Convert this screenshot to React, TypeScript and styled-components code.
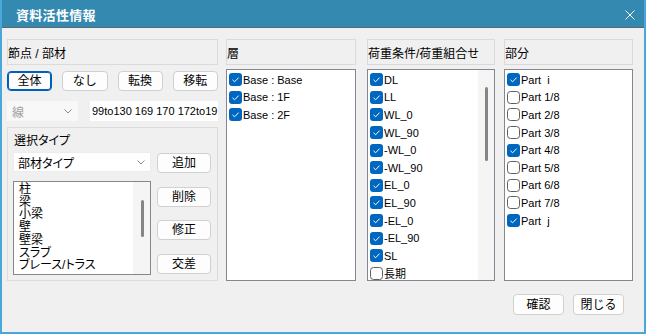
import styled, { createGlobalStyle } from "styled-components";

const GlobalStyle = createGlobalStyle`
  html, body {
    margin: 0;
    padding: 0;
  }
  body {
    font-family: "Liberation Sans", "Noto Sans CJK JP", sans-serif;
    font-size: 12px;
    color: #000;
    background: #f0f0f0;
    font-feature-settings: "palt";
  }
`;

const Window = styled.div`
  width: 646px;
  height: 334px;
  box-sizing: border-box;
  border: 2px solid #4aa8d8;
  border-top: none;
  background: #f0f0f0;
  display: flex;
  flex-direction: column;
`;

const TitleBar = styled.div`
  height: 28px;
  flex: none;
  background: #3489b0;
  border-bottom: 1px solid #5b6670;
  display: flex;
  align-items: center;
  justify-content: space-between;
  padding: 2px 9px 0 14px;
  box-sizing: border-box;
`;

const Title = styled.div`
  color: #fff;
  font-family: "Noto Sans CJK JP", sans-serif;
  font-weight: bold;
  font-size: 13px;
  letter-spacing: 0.3px;
`;

const Body = styled.div`
  display: flex;
  padding: 11px 0 0 5px;
  height: 242px;
`;

const Column = styled.div<{ $w: number; $ml?: number }>`
  width: ${(p) => p.$w}px;
  margin-left: ${(p) => p.$ml ?? 0}px;
  display: flex;
  flex-direction: column;
`;

const Header = styled.div`
  height: 26px;
  flex: none;
  box-sizing: border-box;
  border: 1px solid #dadada;
  display: flex;
  align-items: center;
  padding-left: 0;
  font-size: 12px;
  white-space: nowrap;
  overflow: hidden;
`;

const ButtonRow = styled.div`
  display: grid;
  grid-template-columns: repeat(4, 1fr);
  column-gap: 10px;
  margin-top: 6px;
  height: 20px;
`;

const Button = styled.button<{ $focused?: boolean; $w?: number; $h?: number }>`
  font-family: "Liberation Sans", "Noto Sans CJK JP", sans-serif;
  font-size: 12px;
  color: #000;
  background: #fdfdfd;
  border: 1px solid ${(p) => (p.$focused ? "#005fb8" : "#d0d0d0")};
  box-shadow: ${(p) => (p.$focused ? "inset 0 0 0 1px #005fb8" : "none")};
  border-radius: 4px;
  padding: 0;
  width: ${(p) => (p.$w ? `${p.$w}px` : "auto")};
  height: ${(p) => p.$h ?? 20}px;
  line-height: 1;
  flex: none;
`;

const FieldRow = styled.div`
  display: flex;
  margin-top: 10px;
  height: 20px;
`;

const Combo = styled.div<{ $disabled?: boolean; $w: number }>`
  width: ${(p) => p.$w}px;
  height: 20px;
  box-sizing: border-box;
  background: ${(p) => (p.$disabled ? "#f8f8f8" : "#fff")};
  border: 1px solid ${(p) => (p.$disabled ? "#f8f8f8" : "#ececec")};
  color: ${(p) => (p.$disabled ? "#a0a0a0" : "#000")};
  display: flex;
  align-items: center;
  justify-content: space-between;
  padding: 0 5px 0 4px;
  font-size: 12px;
  flex: none;
`;

const TextField = styled.div`
  margin-left: 12px;
  flex: 1;
  background: #fff;
  padding-left: 2px;
  display: flex;
  align-items: center;
  white-space: nowrap;
  overflow: hidden;
  font-size: 11px;
`;

const Group = styled.div`
  margin-top: 6px;
  flex: 1;
  border: 1px solid #dcdcdc;
  padding: 6px 6px 0 5px;
  display: flex;
  flex-direction: column;
`;

const GroupLabel = styled.div`
  height: 14px;
  line-height: 14px;
  padding-left: 1px;
  font-size: 12px;
`;

const GroupInner = styled.div`
  display: flex;
  margin-top: 4px;
  gap: 6px;
`;

const Stack = styled.div<{ $gap?: number; $pt?: number }>`
  display: flex;
  flex-direction: column;
  gap: ${(p) => p.$gap ?? 0}px;
  padding-top: ${(p) => p.$pt ?? 0}px;
`;

const ListBox = styled.div<{ $h: number; $mt: number }>`
  height: ${(p) => p.$h}px;
  margin-top: ${(p) => p.$mt}px;
  box-sizing: border-box;
  border: 1px solid #828790;
  background: #fff;
  display: flex;
  overflow: hidden;
`;

const TextItems = styled.div`
  flex: 1;
  padding: 1px 0 0 5px;
  font-size: 12px;
  line-height: 12.7px;
  overflow: hidden;
`;

const CheckItems = styled.div`
  flex: 1;
  padding: 1px 0 0 2px;
  overflow: hidden;
`;

const CheckRow = styled.div`
  height: 17.6px;
  display: flex;
  align-items: center;
  gap: 1px;
  font-size: 11px;
  white-space: pre;
`;

const Track = styled.div<{ $w: number }>`
  width: ${(p) => p.$w}px;
  flex: none;
  background: #f5f5f5;
  position: relative;
`;

const Thumb = styled.div`
  position: absolute;
  left: 50%;
  width: 3px;
  margin-left: -1px;
  border-radius: 2px;
  background: #858585;
`;

const Footer = styled.div`
  display: flex;
  justify-content: flex-end;
  gap: 9px;
  margin-top: 13px;
  padding-right: 20px;
`;

const Chevron = () => (
  <svg width="8" height="5" viewBox="0 0 8 5">
    <polyline points="0.5,0.5 4,4 7.5,0.5" fill="none" stroke="#8a8a8a" strokeWidth="1" />
  </svg>
);

const Check = ({ on }: { on: boolean }) => (
  <svg width="13" height="13" viewBox="0 0 13 13" style={{ flex: "none" }}>
    {on ? (
      <>
        <rect x="0" y="0" width="13" height="13" rx="3" fill="#0067c0" />
        <polyline points="3.5,6.8 5.6,8.8 9.6,4.6" fill="none" stroke="#fff" strokeWidth="1" />
      </>
    ) : (
      <rect x="0.5" y="0.5" width="12" height="12" rx="3" fill="#fff" stroke="#5f5f5f" />
    )}
  </svg>
);

const CheckList = ({ items }: { items: [string, boolean][] }) => (
  <CheckItems>
    {items.map(([label, on]) => (
      <CheckRow key={label}>
        <Check on={on} />
        {label}
      </CheckRow>
    ))}
  </CheckItems>
);

const floors: [string, boolean][] = [
  ["Base : Base", true],
  ["Base : 1F", true],
  ["Base : 2F", true],
];

const loads: [string, boolean][] = [
  ["DL", true],
  ["LL", true],
  ["WL_0", true],
  ["WL_90", true],
  ["-WL_0", true],
  ["-WL_90", true],
  ["EL_0", true],
  ["EL_90", true],
  ["-EL_0", true],
  ["-EL_90", true],
  ["SL", true],
  ["長期", false],
];

const parts: [string, boolean][] = [
  ["Part  i", true],
  ["Part 1/8", false],
  ["Part 2/8", false],
  ["Part 3/8", false],
  ["Part 4/8", true],
  ["Part 5/8", false],
  ["Part 6/8", false],
  ["Part 7/8", false],
  ["Part  j", true],
];

const memberTypes = ["柱", "梁", "小梁", "壁", "壁梁", "スラブ", "ブレース/トラス"];

export default function App() {
  return (
    <>
      <GlobalStyle />
      <Window>
        <TitleBar>
          <Title>資料活性情報</Title>
          <svg width="10" height="10" viewBox="0 0 10 10">
            <path d="M0.5 0.5 L9.5 9.5 M9.5 0.5 L0.5 9.5" stroke="#fff" strokeWidth="1" />
          </svg>
        </TitleBar>
        <Body>
          <Column $w={211}>
            <Header>節点 / 部材</Header>
            <ButtonRow>
              <Button $focused>全体</Button>
              <Button>なし</Button>
              <Button>転換</Button>
              <Button>移転</Button>
            </ButtonRow>
            <FieldRow>
              <Combo $disabled $w={71}>
                <span>線</span>
                <Chevron />
              </Combo>
              <TextField>99to130 169 170 172to19</TextField>
            </FieldRow>
            <Group>
              <GroupLabel>選択タイプ</GroupLabel>
              <GroupInner>
                <Stack>
                  <Combo $w={138}>
                    <span>部材タイプ</span>
                    <Chevron />
                  </Combo>
                  <ListBox $h={94} $mt={9}>
                    <TextItems>
                      {memberTypes.map((t) => (
                        <div key={t}>{t}</div>
                      ))}
                    </TextItems>
                    <Track $w={17}>
                      <Thumb style={{ top: 18, height: 37 }} />
                    </Track>
                  </ListBox>
                </Stack>
                <Stack $gap={13.5} $pt={1}>
                  <Button $w={54}>追加</Button>
                  <Button $w={54}>削除</Button>
                  <Button $w={54}>修正</Button>
                  <Button $w={54}>交差</Button>
                </Stack>
              </GroupInner>
            </Group>
          </Column>
          <Column $w={130} $ml={8}>
            <Header>層</Header>
            <ListBox $h={212} $mt={4}>
              <CheckList items={floors} />
            </ListBox>
          </Column>
          <Column $w={128} $ml={11}>
            <Header>荷重条件/荷重組合せ</Header>
            <ListBox $h={212} $mt={4}>
              <CheckList items={loads} />
              <Track $w={16}>
                <Thumb style={{ top: 17, height: 74 }} />
              </Track>
            </ListBox>
          </Column>
          <Column $w={129} $ml={9}>
            <Header>部分</Header>
            <ListBox $h={212} $mt={4}>
              <CheckList items={parts} />
            </ListBox>
          </Column>
        </Body>
        <Footer>
          <Button $w={51} $h={21}>確認</Button>
          <Button $w={51} $h={21}>閉じる</Button>
        </Footer>
      </Window>
    </>
  );
}
